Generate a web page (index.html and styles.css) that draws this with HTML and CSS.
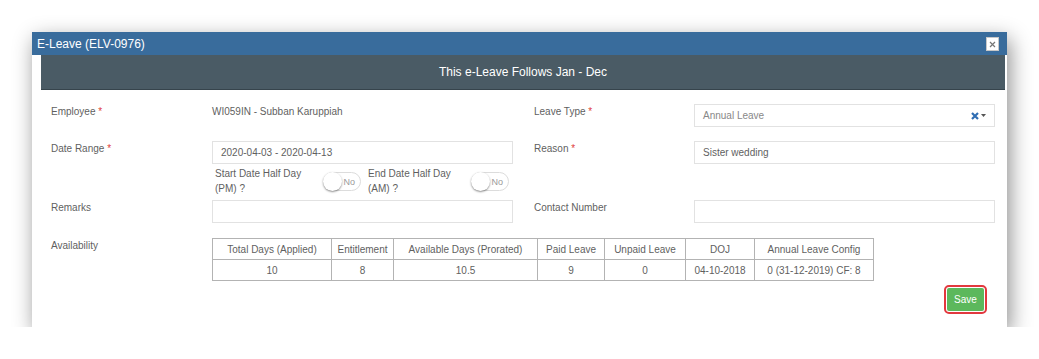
FILE: index.html
```html
<!DOCTYPE html>
<html lang="en">
<head>
  <meta charset="UTF-8" />
  <title>E-Leave</title>
  <link rel="stylesheet" href="styles.css">
</head>
<body>

<div class="modal">
  <div class="modal-title">
    <span>E-Leave (ELV-0976)</span>
    <button class="close-btn" type="button">
      <svg width="7" height="7" viewBox="0 0 7 7"><path d="M1 1L6 6M6 1L1 6" stroke="#777" stroke-width="1.2"/></svg>
    </button>
  </div>

  <div class="period-band">This e-Leave Follows Jan - Dec</div>

  <div class="modal-body">
    <div class="form-row">
      <div class="field-label">Employee <span class="req">*</span></div>
      <div class="static-value">WI059IN - Subban Karuppiah</div>
      <div></div>
      <div class="field-label">Leave Type <span class="req">*</span></div>
      <div class="input select">
        <span class="muted">Annual Leave</span>
        <span class="select-icons">
          <svg width="8" height="8" viewBox="0 0 8 8"><path d="M1 1L7 7M7 1L1 7" stroke="#2f6db3" stroke-width="2.2"/></svg>
          <svg width="5" height="3" viewBox="0 0 5 3"><path d="M0 0H5L2.5 3Z" fill="#555"/></svg>
        </span>
      </div>
    </div>

    <div class="form-row row-date">
      <div class="field-label">Date Range <span class="req">*</span></div>
      <div class="input">2020-04-03 - 2020-04-13</div>
      <div></div>
      <div class="field-label">Reason <span class="req">*</span></div>
      <div class="input">Sister wedding</div>
    </div>

    <div class="form-row row-toggles">
      <div></div>
      <div class="half-days">
        <div class="half-day first">
          <div class="half-label">Start Date Half Day (PM) ?</div>
          <div class="toggle"><span class="knob"></span><span class="toggle-text">No</span></div>
        </div>
        <div class="half-day second">
          <div class="half-label">End Date Half Day (AM) ?</div>
          <div class="toggle"><span class="knob"></span><span class="toggle-text">No</span></div>
        </div>
      </div>
    </div>

    <div class="form-row row-remarks">
      <div class="field-label">Remarks</div>
      <div class="input"></div>
      <div></div>
      <div class="field-label">Contact Number</div>
      <div class="input"></div>
    </div>

    <div class="availability">
      <div class="field-label">Availability</div>
      <table class="avail-table">
        <thead>
          <tr>
            <th>Total Days (Applied)</th>
            <th>Entitlement</th>
            <th>Available Days (Prorated)</th>
            <th>Paid Leave</th>
            <th>Unpaid Leave</th>
            <th>DOJ</th>
            <th>Annual Leave Config</th>
          </tr>
        </thead>
        <tbody>
          <tr>
            <td>10</td>
            <td>8</td>
            <td>10.5</td>
            <td>9</td>
            <td>0</td>
            <td>04-10-2018</td>
            <td>0 (31-12-2019) CF: 8</td>
          </tr>
        </tbody>
      </table>
    </div>

    <div class="actions">
      <div class="highlight">
        <button class="btn-save" type="button">Save</button>
      </div>
    </div>
  </div>
</div>

</body>
</html>
```

FILE: styles.css
```css
* {
  box-sizing: border-box;
}

body {
  margin: 0;
  background: #fff;
  font-family: 'Liberation Sans', Arial, sans-serif;
  color: #5f5f5f;
}

.modal {
  margin: 32px 0 0 32px;
  width: 975px;
  background: #fff;
  box-shadow: 3px 7px 20px rgba(0, 0, 0, 0.45);
}

.modal-title {
  height: 23px;
  background: #396c9c;
  color: #fff;
  font-size: 12px;
  display: flex;
  align-items: center;
  justify-content: space-between;
  padding: 0 8px 0 5px;
}

.close-btn {
  width: 13px;
  height: 14px;
  padding: 0;
  border: 1px solid #c8c8c8;
  background: #fff;
  display: flex;
  align-items: center;
  justify-content: center;
  margin-top: 1px;
}

.period-band {
  height: 35px;
  margin: 0 2px 0 9px;
  background: #4a5b65;
  border-bottom: 1px solid #36444c;
  color: #fff;
  font-size: 12px;
  display: flex;
  align-items: center;
  justify-content: center;
}

.modal-body {
  padding: 14px 12px 13px 19px;
}

.form-row {
  display: grid;
  grid-template-columns: 161px 301px 21px 160px 301px;
  align-items: start;
}

.row-date {
  margin-top: 14px;
}

.row-toggles {
  margin-top: 2px;
  height: 31px;
}

.row-remarks {
  margin-top: 3px;
}

.field-label,
.static-value {
  font-size: 10px;
  line-height: 12px;
  padding-top: 2px;
  color: #5f5f5f;
}

.req {
  color: #e0403a;
}

.input {
  height: 23px;
  border: 1px solid #e2e2e2;
  padding: 0 8px;
  font-size: 10px;
  line-height: 21px;
  color: #5f5f5f;
}

.select {
  display: flex;
  justify-content: space-between;
  align-items: center;
}

.muted {
  color: #888;
}

.select-icons {
  display: flex;
  align-items: center;
  gap: 2px;
}

.half-days {
  display: flex;
}

.half-day {
  display: flex;
  align-items: flex-start;
}

.half-day.first {
  padding-left: 3px;
}

.half-day.first .half-label {
  width: 108px;
}

.half-day.second {
  margin-left: 7px;
}

.half-day.second .half-label {
  width: 103px;
}

.half-label {
  font-size: 10px;
  line-height: 15px;
  color: #5f5f5f;
}

.toggle {
  margin-top: 6px;
  width: 38px;
  height: 19px;
  border: 1px solid #dcdcdc;
  border-radius: 10px;
  position: relative;
  display: flex;
  align-items: center;
  justify-content: flex-end;
  padding-right: 5px;
}

.knob {
  position: absolute;
  left: -1px;
  top: -1px;
  width: 19px;
  height: 19px;
  border-radius: 50%;
  background: #fff;
  box-shadow: 0 1px 2px rgba(0, 0, 0, 0.45);
}

.toggle-text {
  font-size: 9px;
  color: #999;
}

.availability {
  margin-top: 15px;
  display: grid;
  grid-template-columns: 161px auto;
  align-items: start;
}

.avail-table {
  border-collapse: collapse;
  table-layout: fixed;
  width: 661px;
  font-size: 10px;
  color: #5f5f5f;
}

.avail-table th,
.avail-table td {
  border: 1px solid #b3b3b3;
  height: 21px;
  padding: 0;
  text-align: center;
  font-weight: normal;
  line-height: 19px;
}

.avail-table th:nth-child(1) { width: 119px; }
.avail-table th:nth-child(2) { width: 62px; }
.avail-table th:nth-child(3) { width: 144px; }
.avail-table th:nth-child(4) { width: 67px; }
.avail-table th:nth-child(5) { width: 81px; }
.avail-table th:nth-child(6) { width: 69px; }
.avail-table th:nth-child(7) { width: 119px; }

.actions {
  margin-top: 4px;
  padding-right: 8px;
  display: flex;
  justify-content: flex-end;
}

.highlight {
  border: 2px solid #e2383e;
  border-radius: 5px;
  padding: 1px;
}

.btn-save {
  display: block;
  width: 37px;
  height: 23px;
  border: none;
  border-radius: 2px;
  background: #5cb85c;
  color: #fff;
  font-family: 'Liberation Sans', Arial, sans-serif;
  font-size: 10px;
  padding: 0;
}
```
